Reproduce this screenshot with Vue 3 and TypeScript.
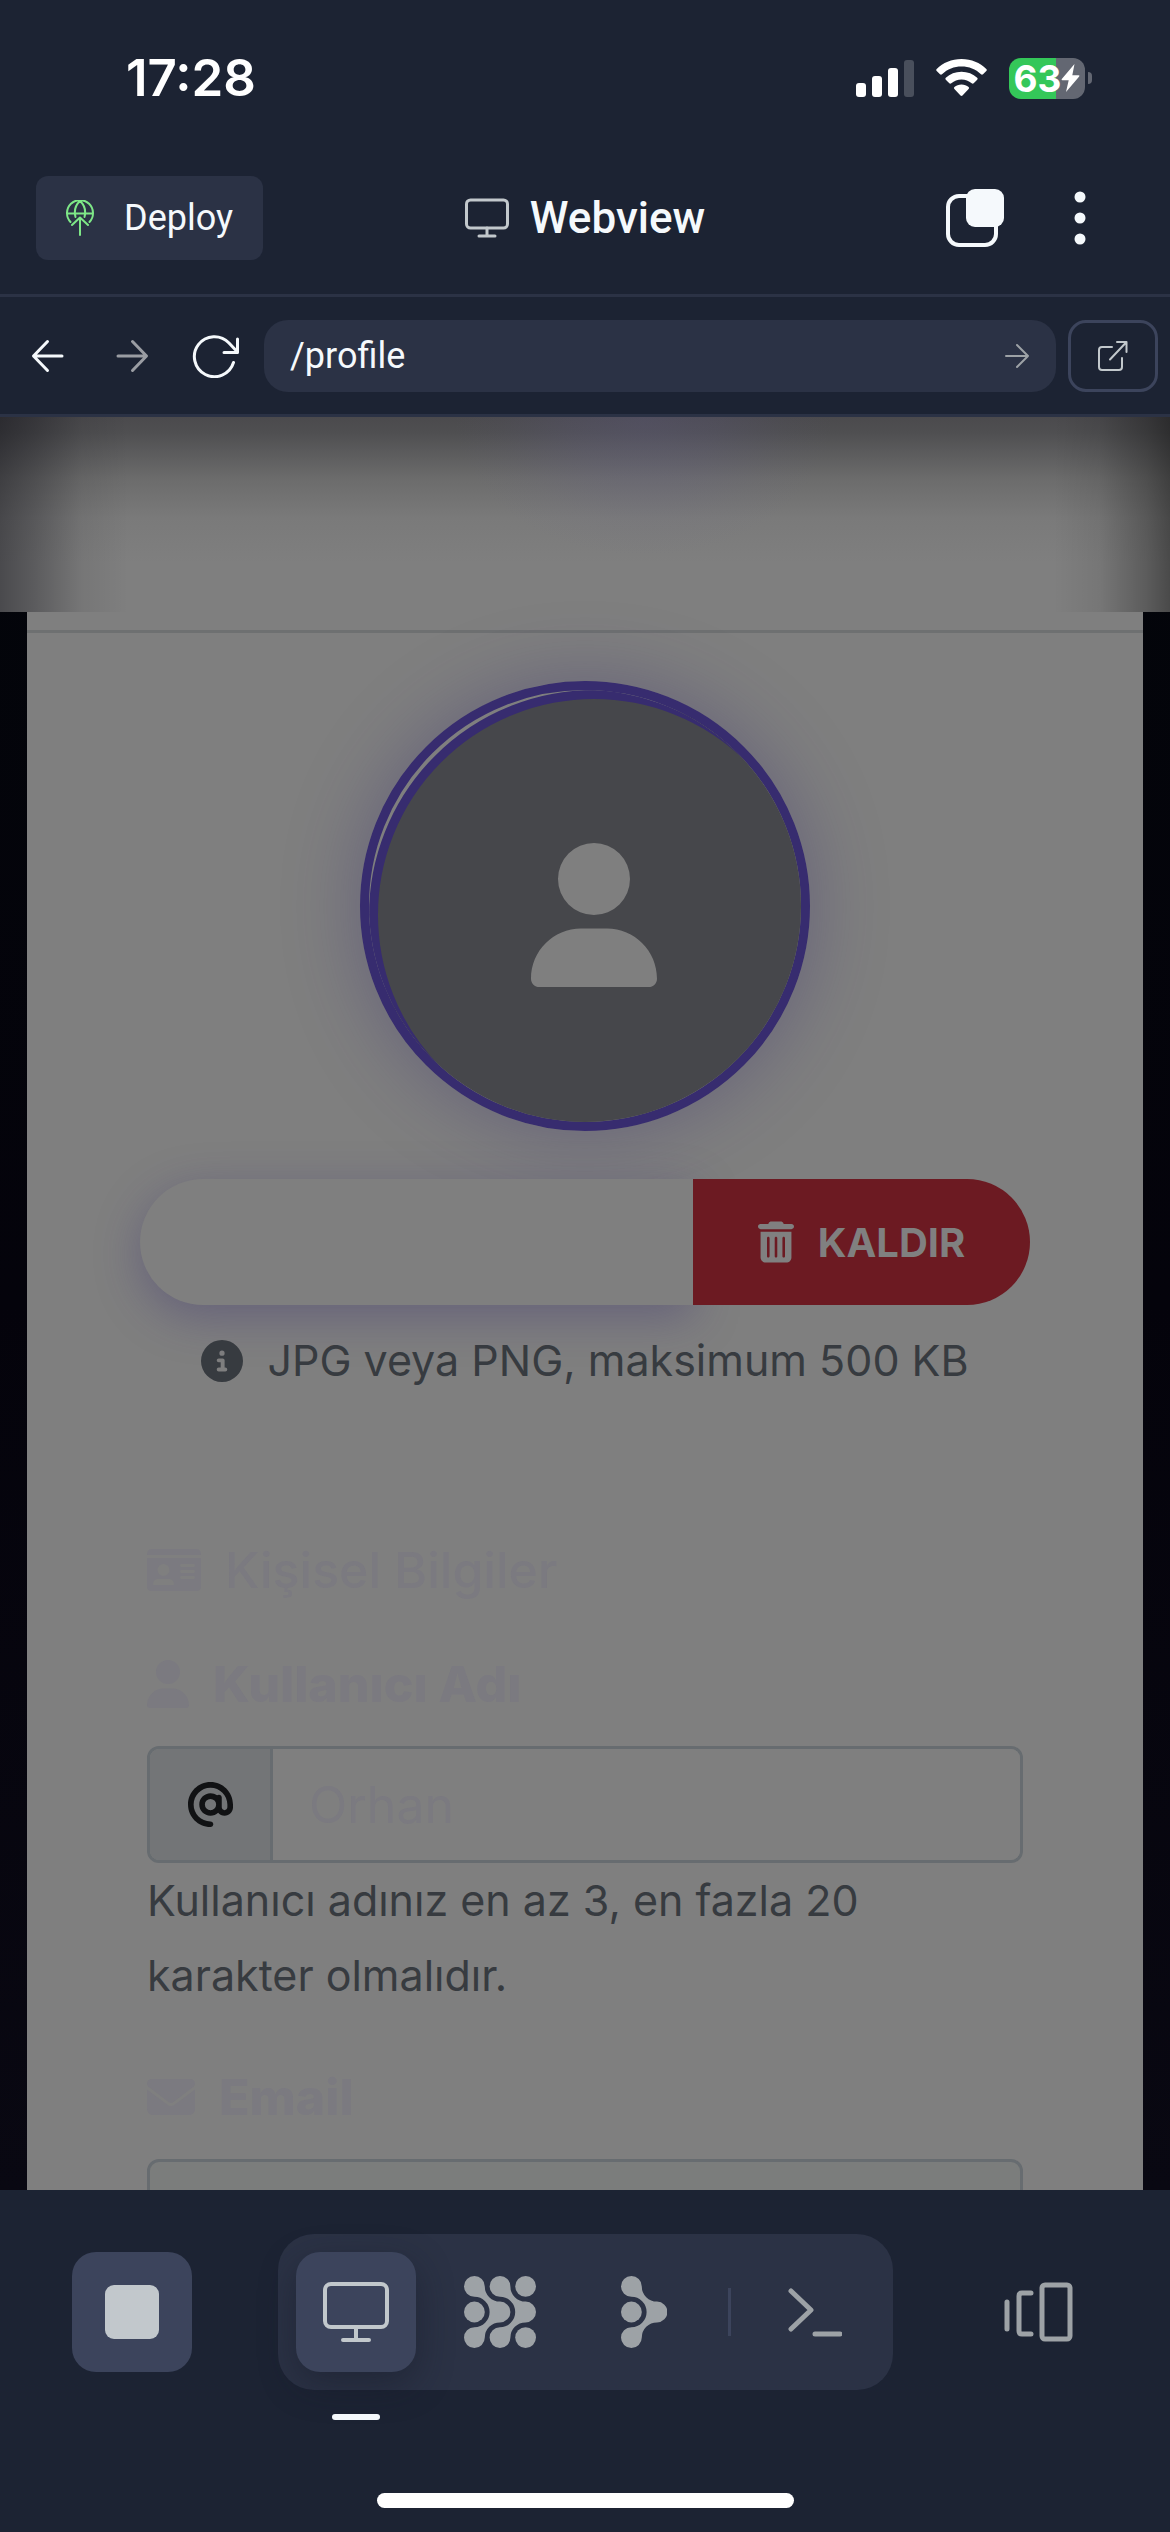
<script setup lang="ts">
import { ref } from 'vue'

const path = ref('/profile')
const username = ref('Orhan')
const email = ref('')
const signalBars = [14, 21, 29, 37]

const userPath =
  'M224 256A128 128 0 1 0 224 0a128 128 0 1 0 0 256zm-45.700 48C79.800 304 0 383.800 0 482.300C0 498.700 13.300 512 29.700 512H418.300c16.400 0 29.700-13.300 29.700-29.700C448 383.800 368.200 304 269.700 304H178.300z'
const forkPath =
  'M10.400 0A10.400 10.400 0 0 1 20.800 10.400A15.200 15.200 0 0 0 36 25.600A10.400 10.400 0 0 1 36 46.400A15.200 15.200 0 0 0 20.800 61.600A10.400 10.400 0 1 1 10.400 51.200A15.200 15.200 0 0 0 10.400 20.800A10.400 10.400 0 0 1 10.400 0z'
</script>

<template>
  <div class="screen">
    <div class="status">
      <span class="clock">17:28</span>
      <div class="indicators">
        <div class="signal">
          <i v-for="(h, i) in signalBars" :key="h" :class="{ off: i === 3 }" :style="{ height: h + 'px' }"></i>
        </div>
        <svg width="51" height="38" viewBox="0 0 51 38" fill="#fff" aria-hidden="true">
          <path d="M25.500 0C35.500 0 44 3.800 50.300 10q1 1 0 2L47 15.300q-1 .9-2 0C39.500 10.200 33 7.600 25.500 7.600S11.500 10.200 6 15.300q-1 .9-2 0L.7 12q-1-1 0-2C7 3.800 15.500 0 25.500 0z" />
          <path d="M25.500 12.800c6.200 0 11.500 2.200 15.700 6q1 1 0 2l-3.500 3.500q-1 .9-2 0c-2.900-2.500-6.200-3.900-10.200-3.900s-7.300 1.400-10.200 3.900q-1 .9-2 0l-3.500-3.500q-1-1 0-2c4.200-3.800 9.500-6 15.700-6z" />
          <path d="M25.500 25.500c2.800 0 5.200.9 7.100 2.500q1 1 0 2l-6.100 6.500q-1 .9-2 0L18.400 30q-1-1 0-2c1.900-1.600 4.300-2.500 7.100-2.500z" />
        </svg>
        <div class="battery">
          <div class="cell">
            <span>63</span>
            <svg width="19" height="28" viewBox="0 0 19 28" fill="#fff" aria-hidden="true">
              <path d="M13.500 0L.8 15q-.8 1.300.7 1.300h6.200L5 28 18.200 12.500q.8-1.300-.7-1.300h-6.200z" />
            </svg>
          </div>
          <i class="nub"></i>
        </div>
      </div>
    </div>

    <header class="toolbar">
      <button class="deploy" type="button">
        <svg width="28" height="36" viewBox="0 0 28 36" fill="none" stroke="#7ee787" stroke-width="2" stroke-linecap="round" stroke-linejoin="round" aria-hidden="true">
          <path d="M4.500 22A13 13 0 1 1 23.500 22M1 13.500h26M9.500 17C8 11 9.500 5 14 1c4.500 4 6 10 4.500 16M14 35V18M6 25l8-7.500 8 7.500" />
        </svg>
        Deploy
      </button>
      <h1 class="title">
        <svg width="44" height="40" viewBox="0 0 44 40" fill="none" stroke="#c2c8cc" stroke-width="3" stroke-linecap="round" aria-hidden="true">
          <rect x="1.500" y="2" width="41" height="28" rx="4" />
          <path d="M22 30v7M14 38h16" />
        </svg>
        Webview
      </h1>
      <div class="actions">
        <button type="button" aria-label="Tabs">
          <svg width="60" height="60" viewBox="0 0 60 60" aria-hidden="true">
            <rect x="3" y="8" width="48" height="49" rx="11" fill="none" stroke="#f5f9fc" stroke-width="4" />
            <rect x="21" y="1" width="38" height="38" rx="9" fill="#f5f9fc" />
          </svg>
        </button>
        <button type="button" aria-label="Menu">
          <svg width="24" height="60" viewBox="0 0 24 60" fill="#f5f9fc" aria-hidden="true">
            <circle cx="12" cy="9" r="5.500" /><circle cx="12" cy="30" r="5.500" /><circle cx="12" cy="51" r="5.500" />
          </svg>
        </button>
      </div>
    </header>

    <nav class="addressbar">
      <button class="nav-button" type="button" aria-label="Back">
        <svg width="36" height="36" viewBox="0 0 36 36" fill="none" stroke="#f5f9fc" stroke-width="3" stroke-linecap="round" stroke-linejoin="round"><path d="M32 18H4M17.500 3.500L3.500 18l14 14.500" /></svg>
      </button>
      <button class="nav-button" type="button" aria-label="Forward">
        <svg width="36" height="36" viewBox="0 0 36 36" fill="none" stroke="#9a9da3" stroke-width="3" stroke-linecap="round" stroke-linejoin="round"><path d="M4 18h28M18.500 3.500l14 14.500-14 14.500" /></svg>
      </button>
      <button class="nav-button" type="button" aria-label="Reload">
        <svg width="48" height="44" viewBox="0 0 48 44" fill="none" stroke="#f5f9fc" stroke-width="3" stroke-linecap="round" stroke-linejoin="round"><path d="M41.500 28.500A20 20 0 1 1 37 9L45 17.500M45.500 5V18.500H32" /></svg>
      </button>
      <div class="url">
        <input v-model="path" type="text" aria-label="Path" />
        <button type="button" aria-label="Go">
          <svg width="26" height="28" viewBox="0 0 26 28" fill="none" stroke="#9da2a6" stroke-width="2" stroke-linecap="round" stroke-linejoin="round"><path d="M2 14h22M13 3l11 11-11 11" /></svg>
        </button>
      </div>
      <button class="open" type="button" aria-label="Open in new tab">
        <svg width="32" height="32" viewBox="0 0 32 32" fill="none" stroke="#c2c8cc" stroke-width="2" stroke-linecap="round" stroke-linejoin="round"><path d="M15 7H5Q2 7 2 10V27q0 3 3 3H22q3 0 3-3V18M13 19.500L29.500 2M20 2H29.500V12" /></svg>
      </button>
    </nav>

    <main class="page">
      <div class="haze"></div>
      <form class="card" @submit.prevent>
        <hr />
        <div class="avatar">
          <div class="photo">
            <svg width="126" height="144" viewBox="0 0 448 512" aria-hidden="true"><path :d="userPath" /></svg>
          </div>
        </div>
        <div class="photo-buttons">
          <button class="upload" type="button" aria-label="Yükle"></button>
          <button class="remove" type="button">
            <svg width="36" height="42" viewBox="0 0 448 512" fill="currentColor" aria-hidden="true">
              <path d="M135.200 17.700C140.600 6.800 151.700 0 163.800 0H284.200c12.100 0 23.200 6.800 28.600 17.700L320 32h96c17.700 0 32 14.300 32 32s-14.300 32-32 32H32C14.300 96 0 81.700 0 64S14.300 32 32 32h96l7.200-14.300zM32 128H416V448c0 35.300-28.700 64-64 64H96c-35.300 0-64-28.700-64-64V128zm96 64c-8.800 0-16 7.200-16 16V432c0 8.800 7.200 16 16 16s16-7.200 16-16V208c0-8.800-7.200-16-16-16zm96 0c-8.800 0-16 7.200-16 16V432c0 8.800 7.200 16 16 16s16-7.200 16-16V208c0-8.800-7.200-16-16-16zm96 0c-8.800 0-16 7.200-16 16V432c0 8.800 7.200 16 16 16s16-7.200 16-16V208c0-8.800-7.200-16-16-16z" />
            </svg>
            KALDIR
          </button>
        </div>
        <p class="hint">
          <svg width="42" height="42" viewBox="0 0 512 512" fill="currentColor" aria-hidden="true">
            <path d="M256 512A256 256 0 1 0 256 0a256 256 0 1 0 0 512zM216 336h24V272H216c-13.300 0-24-10.700-24-24s10.700-24 24-24h48c13.300 0 24 10.700 24 24v88h8c13.300 0 24 10.700 24 24s-10.700 24-24 24H216c-13.300 0-24-10.700-24-24s10.700-24 24-24zm40-208a32 32 0 1 1 0 64 32 32 0 1 1 0-64z" />
          </svg>
          JPG veya PNG, maksimum 500 KB
        </p>

        <section class="fields">
          <h2>
            <svg width="54" height="42" viewBox="0 32 576 448" fill="currentColor" fill-rule="evenodd" aria-hidden="true">
              <path d="M0 96H576Q576 32 528 32H48Q0 32 0 96zM0 128V432Q0 480 48 480H528Q576 480 576 432V128zM64 405c0-29 24-53 53-53H235c29 0 53 24 53 53 0 6-5 11-11 11H75c-6 0-11-5-11-11zM176 192a64 64 0 1 1 0 128 64 64 0 1 1 0-128zM368 192H496a16 16 0 0 1 0 32H368a16 16 0 0 1 0-32zM368 256H496a16 16 0 0 1 0 32H368a16 16 0 0 1 0-32zM368 320H496a16 16 0 0 1 0 32H368a16 16 0 0 1 0-32z" />
            </svg>
            Kişisel Bilgiler
          </h2>
          <label for="username">
            <svg width="42" height="48" viewBox="0 0 448 512" fill="currentColor" aria-hidden="true"><path :d="userPath" /></svg>
            Kullanıcı Adı
          </label>
          <div class="input-group">
            <span class="addon">
              <svg width="45" height="45" viewBox="0 0 512 512" aria-hidden="true">
                <path d="M256 64C150 64 64 150 64 256s86 192 192 192c17.700 0 32 14.300 32 32s-14.300 32-32 32C114.600 512 0 397.400 0 256S114.600 0 256 0S512 114.600 512 256v32c0 53-43 96-96 96c-29.300 0-55.600-13.200-73.200-33.900C320 371.100 289.500 384 256 384c-70.700 0-128-57.300-128-128s57.300-128 128-128c27.900 0 53.700 8.900 74.700 24.100c5.700-5 13.100-8.100 21.300-8.100c17.700 0 32 14.300 32 32v112c0 17.700 14.300 32 32 32s32-14.300 32-32V256c0-106-86-192-192-192zm64 192a64 64 0 1 0-128 0 64 64 0 1 0 128 0z" />
              </svg>
            </span>
            <input id="username" v-model="username" type="text" />
          </div>
          <p class="help">Kullanıcı adınız en az 3, en fazla 20 karakter olmalıdır.</p>
          <label for="email">
            <svg width="48" height="36" viewBox="0 64 512 384" fill="currentColor" aria-hidden="true">
              <path d="M48 64C21.500 64 0 85.500 0 112c0 15.100 7.100 29.300 19.200 38.400L236.800 313.600c11.400 8.500 27 8.500 38.400 0L492.800 150.400c12.100-9.100 19.200-23.300 19.200-38.400c0-26.500-21.500-48-48-48H48zM0 176V384c0 35.300 28.700 64 64 64H448c35.300 0 64-28.700 64-64V176L294.400 339.200c-22.800 17.100-54 17.100-76.800 0L0 176z" />
            </svg>
            Email
          </label>
          <input id="email" v-model="email" class="email" type="email" readonly />
        </section>
      </form>
    </main>

    <footer class="dock">
      <div class="dock-row">
        <button class="tile raised" type="button" aria-label="Stop">
          <svg width="54" height="54" viewBox="0 0 54 54"><rect x="0" y="0" width="54" height="54" rx="9" fill="#c2c8cc" /></svg>
        </button>
        <div class="panes">
          <button class="tile raised active" type="button" aria-label="Webview">
            <svg width="66" height="62" viewBox="0 0 66 62" fill="none" stroke="#c2c8cc" stroke-width="4" stroke-linecap="round"><rect x="2" y="3" width="62" height="43" rx="6" /><path d="M33 46v12M20 59h26" /></svg>
          </button>
          <button class="tile" type="button" aria-label="Tools">
            <svg width="72" height="72" viewBox="0 0 72 72" fill="#9da2a6"><path :d="forkPath" /><path :d="forkPath" transform="translate(25.600 0)" /><circle cx="10.400" cy="36" r="10.400" /><circle cx="61.600" cy="10.400" r="10.400" /><circle cx="61.600" cy="61.600" r="10.400" /></svg>
          </button>
          <button class="tile" type="button" aria-label="Agent">
            <svg width="46" height="72" viewBox="0 0 46 72" fill="#9da2a6"><path :d="forkPath" /><circle cx="10.400" cy="36" r="10.400" /></svg>
          </button>
          <i class="separator"></i>
          <button class="tile" type="button" aria-label="Shell">
            <svg width="54" height="50" viewBox="0 0 54 50" fill="none" stroke="#9da2a6" stroke-width="5" stroke-linecap="round" stroke-linejoin="round"><path d="M3 4l20 19L3 42M27 47h25" /></svg>
          </button>
        </div>
        <button class="tile" type="button" aria-label="Layout">
          <svg width="70" height="60" viewBox="0 0 70 60" fill="none" stroke="#9da2a6" stroke-width="5" stroke-linecap="round" stroke-linejoin="round"><rect x="39" y="3" width="28" height="54" rx="3" /><path d="M28 11H19Q16 11 16 14V49q0 3 3 3h9M4 20v27" /></svg>
        </button>
      </div>
      <i class="home"></i>
    </footer>
  </div>
</template>

<style>
body {
  margin: 0;
  background: #1c2333;
}
</style>

<style scoped>
* {
  box-sizing: border-box;
}
svg {
  display: block;
  flex: none;
}
button {
  padding: 0;
  border: 0;
  background: none;
  color: inherit;
  font: inherit;
}
h1,
h2,
p {
  margin: 0;
}
.screen {
  display: flex;
  flex-direction: column;
  height: 100vh;
  background: #1c2333;
  color: #f5f9fc;
  font-family: Roboto, sans-serif;
}
.status {
  display: flex;
  flex: none;
  align-items: center;
  justify-content: space-between;
  height: 142px;
  padding: 14px 78px 0 126px;
}
.clock {
  color: #fff;
  font: 600 51px/60px Inter, sans-serif;
}
.indicators {
  display: flex;
  align-items: center;
  gap: 22px;
}
.signal {
  display: flex;
  align-items: flex-end;
  gap: 6px;
}
.signal i {
  width: 10px;
  border-radius: 3px;
  background: #fff;
}
.signal .off {
  background: #494f5c;
}
.battery {
  display: flex;
  align-items: center;
  gap: 3px;
}
.cell {
  display: flex;
  align-items: center;
  justify-content: center;
  width: 76px;
  height: 41px;
  border-radius: 12px;
  background: linear-gradient(90deg, #34c759 62%, #636772 62%);
  color: #fff;
  font: 700 37px/41px Inter, sans-serif;
}
.nub {
  width: 4px;
  height: 12px;
  border-radius: 0 4px 4px 0;
  background: #636772;
}
.toolbar {
  display: grid;
  flex: none;
  grid-template-columns: 1fr auto 1fr;
  align-items: center;
  height: 155px;
  padding: 0 36px;
  border-bottom: 3px solid #2b3245;
}
.deploy {
  display: flex;
  align-items: center;
  justify-self: start;
  gap: 30px;
  height: 84px;
  padding: 0 30px;
  border-radius: 12px;
  background: #2b3245;
  font-size: 36px;
}
.title {
  display: flex;
  align-items: center;
  gap: 21px;
  font-size: 44px;
  font-weight: 500;
}
.actions {
  display: flex;
  justify-self: end;
  gap: 63px;
  margin-right: 42px;
}
.addressbar {
  display: flex;
  flex: none;
  align-items: center;
  height: 120px;
  padding: 0 12px 0 6px;
  border-bottom: 3px solid #2b3245;
}
.nav-button {
  display: grid;
  place-items: center;
  flex: none;
  width: 84px;
  height: 72px;
}
.url {
  display: flex;
  flex: 1;
  align-items: center;
  min-width: 0;
  height: 72px;
  margin: 0 12px 0 6px;
  padding: 0 26px;
  border-radius: 24px;
  background: #2b3245;
}
.url input {
  flex: 1;
  min-width: 0;
  padding: 0;
  border: 0;
  outline: 0;
  background: none;
  color: #f5f9fc;
  font: 36px/48px Roboto, sans-serif;
}
.open {
  display: grid;
  place-items: center;
  flex: none;
  width: 90px;
  height: 72px;
  border: 3px solid #3c445c;
  border-radius: 18px;
}
.page {
  flex: 1;
  min-height: 0;
  overflow: hidden;
  background: linear-gradient(#03050a, #04030b 50%, #090812);
  font-family: Inter, sans-serif;
}
.haze {
  height: 195px;
  background:
    radial-gradient(ellipse 190px 140px at 55% 0%, rgba(96, 90, 140, 0.28), rgba(96, 90, 140, 0.18) 40%, rgba(96, 90, 140, 0.05) 75%, transparent),
    linear-gradient(90deg, rgba(0, 0, 8, 0.42), rgba(0, 0, 8, 0.28) 3%, rgba(0, 0, 8, 0.07) 7%, transparent 11%, transparent 90%, rgba(0, 0, 0, 0.07) 94%, rgba(0, 0, 0, 0.28) 98%, rgba(0, 0, 0, 0.42)),
    linear-gradient(#4b4a4d, #4f4f51 8%, #6c6c6c 32%, #7a7a7a 52%, #7f7f7f 75%);
}
.card {
  display: flex;
  flex-direction: column;
  align-items: center;
  margin: 0 27px;
  padding-top: 18px;
  background: #7f7f7f;
}
hr {
  width: 100%;
  height: 3px;
  margin: 0 0 48px;
  border: 0;
  background: #6e7071;
}
.avatar {
  flex: none;
  width: 450px;
  height: 450px;
  overflow: hidden;
  border: 9px solid #372c6f;
  border-radius: 50%;
  box-shadow: 0 0 75px rgba(55, 44, 111, 0.36);
}
.photo {
  display: grid;
  place-items: center;
  width: 450px;
  height: 450px;
  border: 9px solid #372c6f;
  border-radius: 50%;
  background: #46474b;
  fill: #7f7f7f;
}
.photo-buttons {
  display: flex;
  width: 890px;
  max-width: 100%;
  height: 126px;
  margin-top: 48px;
}
.upload {
  flex: 1;
  border-radius: 63px 0 0 63px;
  background: #7f7f7f;
  box-shadow: 0 12px 45px rgba(55, 44, 111, 0.35);
}
.remove {
  position: relative;
  display: flex;
  align-items: center;
  justify-content: center;
  gap: 24px;
  width: 337px;
  border-radius: 0 63px 63px 0;
  background: #6c1a22;
  color: #808080;
  font-size: 40px;
  font-weight: 700;
}
.hint {
  display: flex;
  align-items: center;
  gap: 24px;
  margin-top: 24px;
  color: #373b40;
  font-size: 43px;
  line-height: 63px;
  white-space: nowrap;
}
.fields {
  align-self: stretch;
  padding: 0 120px;
  margin-top: 148px;
  color: #7b7a80;
}
h2,
label {
  display: flex;
  align-items: center;
  gap: 24px;
  font-size: 50px;
}
h2 {
  margin-bottom: 48px;
  font-weight: 500;
  line-height: 60px;
}
label {
  margin-bottom: 26px;
  font-weight: 800;
  line-height: 72px;
}
.input-group {
  display: flex;
  height: 117px;
  overflow: hidden;
  border: 3px solid #676c70;
  border-radius: 12px;
}
.addon {
  display: grid;
  place-items: center;
  width: 123px;
  border-right: 3px solid #676c70;
  background: #737577;
  fill: #111214;
}
.input-group input {
  flex: 1;
  min-width: 0;
  padding: 0 36px;
  border: 0;
  outline: 0;
  background: #7f7f7f;
  color: #7b7a80;
  font: 50px/72px Inter, sans-serif;
}
.help {
  margin-bottom: 48px;
  color: #373b40;
  font-size: 43px;
  line-height: 75px;
}
.email {
  display: block;
  width: 100%;
  height: 117px;
  border: 3px solid #676c70;
  border-radius: 12px;
  outline: 0;
  background: #7b7d7c;
}
.dock {
  display: flex;
  flex: none;
  flex-direction: column;
  align-items: center;
  gap: 103px;
  padding: 44px 0 24px;
}
.dock-row {
  display: flex;
  align-items: center;
  justify-content: space-between;
  width: 100%;
  padding: 0 72px;
}
.panes {
  display: flex;
  align-items: center;
  gap: 24px;
  padding: 18px;
  border-radius: 36px;
  background: #2b3245;
}
.tile {
  position: relative;
  display: grid;
  place-items: center;
  width: 120px;
  height: 120px;
  border-radius: 24px;
}
.raised {
  background: #3c445c;
}
.active {
  box-shadow: 0 12px 36px rgba(20, 24, 38, 0.45);
}
.active::after {
  position: absolute;
  bottom: -48px;
  left: 36px;
  width: 48px;
  height: 6px;
  border-radius: 3px;
  background: #f5f9fc;
  content: '';
}
.separator {
  width: 3px;
  height: 48px;
  background: #3c445c;
}
.home {
  width: 417px;
  max-width: 60%;
  height: 15px;
  border-radius: 8px;
  background: #fff;
}
</style>
